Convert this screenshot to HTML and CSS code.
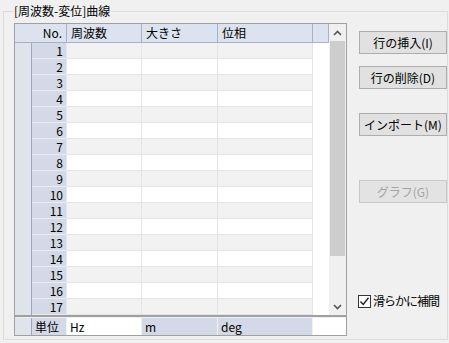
FILE: index.html
```html
<!DOCTYPE html>
<html lang="ja">
<head>
  <meta charset="UTF-8" />
  <title>[周波数-変位]曲線</title>
  <link rel="stylesheet" href="styles.css">
</head>
<body>
  <fieldset class="group">
    <legend>[周波数-変位]曲線</legend>
    <div class="content">
      <div class="grid">
        <div class="grid-body">
          <div class="table">
            <div class="head">
              <span class="hcell hno">No.</span>
              <span class="hcell">周波数</span>
              <span class="hcell">大きさ</span>
              <span class="hcell">位相</span>
              <span class="hcell"></span>
            </div>
            <div class="row odd"><span class="ind"></span><span class="no">1</span><span class="c"></span><span class="c"></span><span class="c"></span><span class="cx"></span></div>
            <div class="row"><span class="ind"></span><span class="no">2</span><span class="c"></span><span class="c"></span><span class="c"></span><span class="cx"></span></div>
            <div class="row odd"><span class="ind"></span><span class="no">3</span><span class="c"></span><span class="c"></span><span class="c"></span><span class="cx"></span></div>
            <div class="row"><span class="ind"></span><span class="no">4</span><span class="c"></span><span class="c"></span><span class="c"></span><span class="cx"></span></div>
            <div class="row odd"><span class="ind"></span><span class="no">5</span><span class="c"></span><span class="c"></span><span class="c"></span><span class="cx"></span></div>
            <div class="row"><span class="ind"></span><span class="no">6</span><span class="c"></span><span class="c"></span><span class="c"></span><span class="cx"></span></div>
            <div class="row odd"><span class="ind"></span><span class="no">7</span><span class="c"></span><span class="c"></span><span class="c"></span><span class="cx"></span></div>
            <div class="row"><span class="ind"></span><span class="no">8</span><span class="c"></span><span class="c"></span><span class="c"></span><span class="cx"></span></div>
            <div class="row odd"><span class="ind"></span><span class="no">9</span><span class="c"></span><span class="c"></span><span class="c"></span><span class="cx"></span></div>
            <div class="row"><span class="ind"></span><span class="no">10</span><span class="c"></span><span class="c"></span><span class="c"></span><span class="cx"></span></div>
            <div class="row odd"><span class="ind"></span><span class="no">11</span><span class="c"></span><span class="c"></span><span class="c"></span><span class="cx"></span></div>
            <div class="row"><span class="ind"></span><span class="no">12</span><span class="c"></span><span class="c"></span><span class="c"></span><span class="cx"></span></div>
            <div class="row odd"><span class="ind"></span><span class="no">13</span><span class="c"></span><span class="c"></span><span class="c"></span><span class="cx"></span></div>
            <div class="row"><span class="ind"></span><span class="no">14</span><span class="c"></span><span class="c"></span><span class="c"></span><span class="cx"></span></div>
            <div class="row odd"><span class="ind"></span><span class="no">15</span><span class="c"></span><span class="c"></span><span class="c"></span><span class="cx"></span></div>
            <div class="row"><span class="ind"></span><span class="no">16</span><span class="c"></span><span class="c"></span><span class="c"></span><span class="cx"></span></div>
            <div class="row odd"><span class="ind"></span><span class="no">17</span><span class="c"></span><span class="c"></span><span class="c"></span><span class="cx"></span></div>
          </div>
          <div class="scrollbar">
            <div class="arrow">
              <svg width="9" height="6" viewBox="0 0 9 6"><polyline points="1,5 4.5,1.5 8,5" fill="none" stroke="#555" stroke-width="1.6"/></svg>
            </div>
            <div class="track"><div class="thumb"></div></div>
            <div class="arrow">
              <svg width="9" height="6" viewBox="0 0 9 6"><polyline points="1,1 4.5,4.5 8,1" fill="none" stroke="#555" stroke-width="1.6"/></svg>
            </div>
          </div>
        </div>
        <div class="footer">
          <span class="ind"></span>
          <span class="fcell unit">単位</span>
          <span class="fcell white">Hz</span>
          <span class="fcell">m</span>
          <span class="fcell">deg</span>
          <span class="fcell white rest"></span>
        </div>
      </div>

      <div class="side">
        <button class="btn">行の挿入(I)</button>
        <button class="btn gap-s">行の削除(D)</button>
        <button class="btn gap-m">インポート(M)</button>
        <button class="btn gap-l" disabled>グラフ(G)</button>
        <label class="check">
          <span class="box">
            <svg width="11" height="11" viewBox="0 0 11 11"><polyline points="1.5,5.5 4.2,8.5 9.5,1.8" fill="none" stroke="#222" stroke-width="1.4"/></svg>
          </span>
          <span class="check-text">滑らかに補間</span>
        </label>
      </div>
    </div>
  </fieldset>
</body>
</html>
```

FILE: styles.css
```css
* {
  box-sizing: border-box;
}

body {
  margin: 0;
  background: #f0f0f0;
  font-family: "Noto Sans CJK JP", "Noto Sans", sans-serif;
  font-size: 12px;
  color: #000;
}

.group {
  margin: 4px 0 0 3px;
  width: 445px;
  height: 336px;
  padding: 5px 0 0 10px;
  border: 1px solid #dcdcdc;
}

.group legend {
  padding: 0 1px;
  margin-left: -1px;
  line-height: 14px;
}

.content {
  display: flex;
}

/* grid */
.grid {
  width: 333px;
  border: 1px solid #a0a0a0;
  background: #fff;
}

.grid-body {
  display: flex;
}

.table {
  width: 314px;
}

.head,
.row,
.footer {
  display: grid;
  grid-template-columns: 17px 35px 75px 76px 95px 16px;
}

.head {
  height: 19px;
  background: #dde3ee;
  border-bottom: 1px solid #a9b1c8;
}

.hcell {
  padding-left: 4px;
  line-height: 18px;
  border-right: 1px solid #a9b1c8;
}

.hcell.hno {
  grid-column: span 2;
  text-align: right;
  padding: 0 4px 0 0;
}

.row {
  height: 16px;
}

.ind {
  background: #dfe3ec;
  border-right: 1px solid #9ea7c2;
}

.no {
  background: #d4d9e7;
  border-bottom: 1px solid #e9ecf3;
  border-right: 1px solid #e3e6ee;
  text-align: right;
  padding-right: 3px;
  line-height: 15px;
}

.c {
  background: #fff;
  border-right: 1px solid #e4e4e4;
  border-bottom: 1px solid #e4e4e4;
}

.row.odd .c {
  background: #f3f2f3;
}

.cx {
  background: #fff;
}

/* scrollbar */
.scrollbar {
  width: 17px;
  display: flex;
  flex-direction: column;
  background: #f0f0f0;
}

.arrow {
  height: 17px;
  display: flex;
  align-items: center;
  justify-content: center;
}

.track {
  flex: 1;
  padding: 0 1px;
}

.thumb {
  height: 215px;
  background: #cdcdcd;
}

/* footer */
.footer {
  grid-template-columns: 17px 35px 75px 76px 95px 33px;
  height: 20px;
  border-top: 2px solid #a0a0a0;
  padding-top: 1px;
  background: #f0f0f0;
}

.fcell {
  background: #d4d9e7;
  border-right: 1px solid #f0f0f0;
  padding-left: 3px;
  line-height: 17px;
}

.fcell.white {
  background: #fff;
}

.fcell.rest {
  border-right: none;
}

/* side buttons */
.side {
  display: flex;
  flex-direction: column;
  margin: 8px 0 0 12px;
  width: 88px;
}

.btn {
  height: 23px;
  padding: 0;
  font-family: inherit;
  font-size: 12px;
  color: #000;
  background: #e1e1e1;
  border: 1px solid #adadad;
  border-radius: 0;
}

.btn:disabled {
  color: #a3a3a3;
  background: #e3e3e3;
  border-color: #c8c8c8;
}

.gap-s {
  margin-top: 12px;
}

.gap-m {
  margin-top: 24px;
}

.gap-l {
  margin-top: 44px;
}

.check {
  display: flex;
  align-items: center;
  gap: 2px;
  margin: 91px 0 0 -1px;
  line-height: 14px;
  white-space: nowrap;
}

.check-text {
  letter-spacing: -1px;
}

.box {
  width: 13px;
  height: 13px;
  border: 1px solid #333;
  background: #fff;
  display: flex;
  align-items: center;
  justify-content: center;
}
```
